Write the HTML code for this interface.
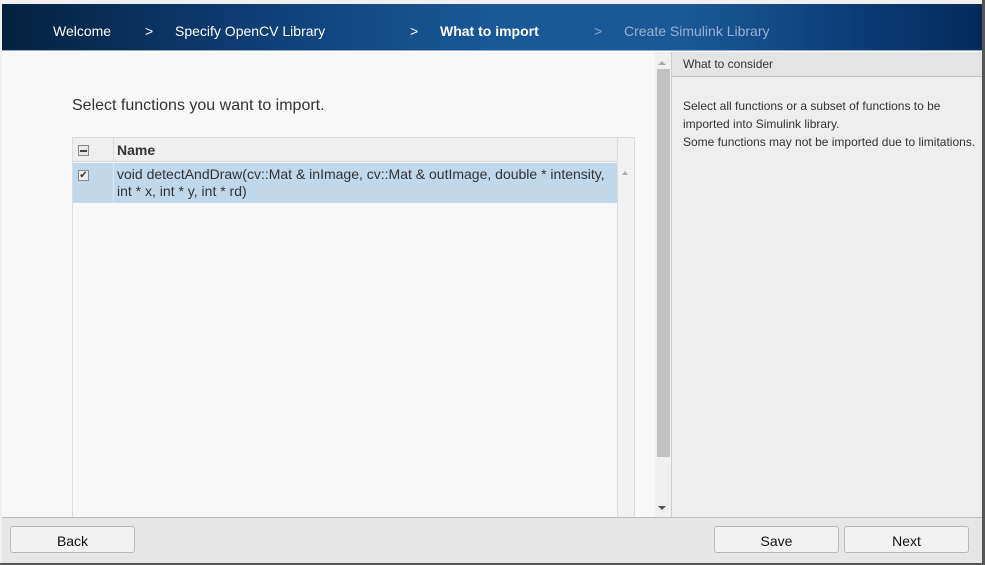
<!DOCTYPE html>
<html><head><style>
*{margin:0;padding:0;box-sizing:border-box}
body{width:985px;height:565px;position:relative;background:#fff;font-family:"Liberation Sans",sans-serif;overflow:hidden}
.a{position:absolute}
.hdr{left:2px;top:4px;width:980px;height:47px;background:linear-gradient(90deg,#04213f 0%,#0e3d74 25%,#1a5898 50%,#1a5898 70%,#0b3b74 88%,#032a5a 100%);border-bottom:1px solid #9aa8b8}
.hdr span{position:absolute;top:19px;font-size:14px;color:#fff}
.btn{height:27px;background:#f2f2f2;border:1px solid #b8b8b8;border-radius:3px;font-size:14px;color:#111;text-align:center;line-height:28px}
</style></head><body>
<div class="a" style="left:0;top:0;width:985px;height:4px;background:#f0f0f0"></div>
<div class="a hdr">
<span style="left:51px">Welcome</span>
<span style="left:143px">&gt;</span>
<span style="left:173px">Specify OpenCV Library</span>
<span style="left:408px">&gt;</span>
<span style="left:438px;font-weight:bold">What to import</span>
<span style="left:592px;color:#8ea6c2">&gt;</span>
<span style="left:622px;color:#9cb0c8">Create Simulink Library</span>
</div>
<div class="a" style="left:982px;top:0;width:3px;height:565px;background:#555"></div>
<div class="a" style="left:0;top:0;width:2px;height:565px;background:#f0f0f0"></div>
<div class="a" style="left:2px;top:52px;width:653px;height:465px;background:#f8f8f8"></div>
<div class="a" style="left:72px;top:97px;font-size:16px;color:#333">Select functions you want to import.</div>
<div class="a" style="left:72px;top:137px;width:563px;height:380px;border:1px solid #dcdcdc;border-bottom:none;background:#f8f8f8"></div>
<div class="a" style="left:73px;top:138px;width:544px;height:24px;background:#efefef;border-bottom:1px solid #d8d8d8"></div>
<div class="a" style="left:113px;top:138px;width:1px;height:24px;background:#dcdcdc"></div>
<div class="a" style="left:617px;top:138px;width:17px;height:379px;background:#f2f2f2;border-left:1px solid #dcdcdc"></div>
<div class="a" style="left:78px;top:145px;width:11px;height:11px;border:1px solid #888;background:#e8e8e8"><div style="margin:3.5px 1px;height:2px;background:#444"></div></div>
<div class="a" style="left:117px;top:142px;font-size:14px;font-weight:bold;color:#333">Name</div>
<div class="a" style="left:73px;top:163px;width:544px;height:40px;background:#c1d7ea"></div>
<div class="a" style="left:113px;top:163px;width:1px;height:40px;background:#dde8f2"></div>
<div class="a" style="left:78px;top:170px;width:11px;height:11px;border:1px solid #888;background:#eee;font-size:10px;line-height:9px;text-align:center;color:#333">✔</div>
<div class="a" style="left:117px;top:166px;font-size:14px;line-height:17px;color:#333;width:500px">void detectAndDraw(cv::Mat &amp; inImage, cv::Mat &amp; outImage, double * intensity,<br>int * x, int * y, int * rd)</div>
<div class="a" style="left:622px;top:171px;width:0;height:0;border-left:3px solid transparent;border-right:3px solid transparent;border-bottom:4px solid #aaa"></div>
<div class="a" style="left:655px;top:52px;width:17px;height:465px;background:#f0f0f0;border-right:1px solid #cfcfcf"></div>
<div class="a" style="left:658px;top:61px;width:0;height:0;border-left:4px solid transparent;border-right:4px solid transparent;border-bottom:4px solid #aaa"></div>
<div class="a" style="left:657px;top:69px;width:13px;height:388px;background:#c2c2c2"></div>
<div class="a" style="left:658px;top:506px;width:0;height:0;border-left:4px solid transparent;border-right:4px solid transparent;border-top:4px solid #555"></div>
<div class="a" style="left:672px;top:52px;width:310px;height:465px;background:#eeeeee"></div>
<div class="a" style="left:672px;top:52px;width:310px;height:25px;background:#e4e4e4;border-bottom:1px solid #c4c4c4"></div>
<div class="a" style="left:683px;top:57px;font-size:12px;color:#333">What to consider</div>
<div class="a" style="left:683px;top:97px;font-size:12px;line-height:18px;color:#333">Select all functions or a subset of functions to be<br>imported into Simulink library.<br>Some functions may not be imported due to limitations.</div>
<div class="a" style="left:2px;top:517px;width:980px;height:46px;background:#e6e6e6;border-top:1px solid #bcbcbc"></div>
<div class="a" style="left:0;top:563px;width:985px;height:2px;background:#555"></div>
<div class="a btn" style="left:10px;top:526px;width:125px">Back</div>
<div class="a btn" style="left:714px;top:526px;width:125px">Save</div>
<div class="a btn" style="left:844px;top:526px;width:125px">Next</div>
</body></html>
